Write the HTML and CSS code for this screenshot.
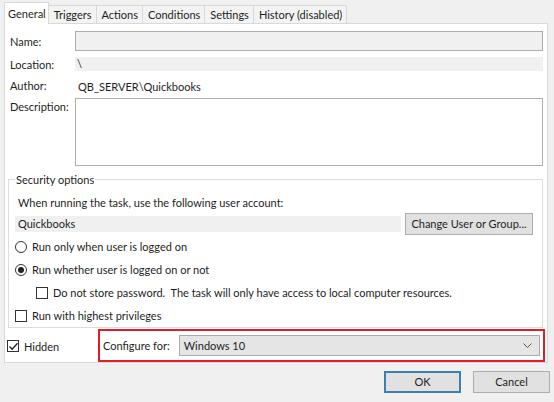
FILE: index.html
```html
<!DOCTYPE html>
<html lang="en">
<head>
    <meta charset="UTF-8">
    <title>Task Properties</title>
    <link rel="stylesheet" href="styles.css">
</head>
<body>

<div class="dialog">
    <div class="tabs">
        <div class="tab active">General</div>
        <div class="tab">Triggers</div>
        <div class="tab">Actions</div>
        <div class="tab">Conditions</div>
        <div class="tab">Settings</div>
        <div class="tab">History (disabled)</div>
    </div>

    <div class="panel">
        <div class="fields">
            <div class="label row-name">Name:</div>
            <div class="input row-name"></div>

            <div class="label row-location">Location:</div>
            <div class="readonly row-location">\</div>

            <div class="label row-author">Author:</div>
            <div class="value row-author">QB_SERVER\Quickbooks</div>

            <div class="label label-top row-desc">Description:</div>
            <div class="textarea row-desc"></div>
        </div>

        <fieldset class="security">
            <legend>Security options</legend>
            <div class="hint">When running the task, use the following user account:</div>
            <div class="account">
                <div class="account-name">Quickbooks</div>
                <div class="btn btn-wide">Change User or Group...</div>
            </div>
            <div class="option">
                <span class="radio"></span>
                <span>Run only when user is logged on</span>
            </div>
            <div class="option">
                <span class="radio checked"></span>
                <span>Run whether user is logged on or not</span>
            </div>
            <div class="option sub">
                <span class="check"></span>
                <span>Do not store password.&nbsp; The task will only have access to local computer resources.</span>
            </div>
            <div class="option">
                <span class="check"></span>
                <span>Run with highest privileges</span>
            </div>
        </fieldset>

        <div class="bottom">
            <div class="option hidden-opt">
                <span class="check checked">
                    <svg width="11" height="11" viewBox="0 0 11 11"><path d="M1.5 5.5 L4.2 8.2 L9.5 2.2" fill="none" stroke="#222" stroke-width="1.3"/></svg>
                </span>
                <span>Hidden</span>
            </div>
            <div class="configure">
                <span>Configure for:</span>
                <div class="select">
                    <span>Windows 10</span>
                    <svg width="9" height="5" viewBox="0 0 9 5"><path d="M0.5 0.5 L4.5 4.5 L8.5 0.5" fill="none" stroke="#555" stroke-width="1"/></svg>
                </div>
            </div>
        </div>
    </div>

    <div class="buttons">
        <div class="btn btn-default">OK</div>
        <div class="btn">Cancel</div>
    </div>
</div>

</body>
</html>
```

FILE: styles.css
```css
body {
    margin: 0;
    background-color: #f0f0f0;
    font-family: Lato, "Noto Sans", sans-serif;
    font-size: 11px;
    color: #1e1e1e;
}

.dialog {
    width: 554px;
    height: 402px;
    padding-top: 2px;
    box-sizing: border-box;
}

/* tab strip */
.tabs {
    display: flex;
    align-items: flex-end;
    margin-left: 4px;
    height: 21px;
    position: relative;
    z-index: 1;
}

.tab {
    height: 18px;
    line-height: 17px;
    padding: 0 4px 0 5px;
    border: 1px solid #d9d9d9;
    border-bottom: none;
    border-left: none;
    background-color: #f3f3f3;
    box-sizing: border-box;
}

.tab.active {
    height: 22px;
    line-height: 21px;
    margin-bottom: -1px;
    background-color: #fff;
    border-left: 1px solid #d9d9d9;
    padding: 0 2px 0 3px;
}

.panel {
    margin: 0 6px 0 4px;
    height: 340px;
    box-sizing: border-box;
    background-color: #fff;
    border: 1px solid #d9d9d9;
    padding: 7px 4px 0 5px;
}

/* name / location / author / description */
.fields {
    display: grid;
    grid-template-columns: 65px 1fr;
    grid-template-rows: 20px 14px 14px 69px;
    row-gap: 6px;
}

.fields .row-author { margin-top: 1px; }
.fields .row-desc { margin-top: 1px; }

.label {
    display: flex;
    align-items: center;
}

.row-author {
    padding-top: 2px;
}

.label-top {
    align-items: flex-start;
    padding-top: 2px;
}

.input {
    background-color: #f0f0f0;
    border: 1px solid #adadad;
}

.readonly {
    background-color: #f0f0f0;
    padding-left: 2px;
    line-height: 14px;
}

.value {
    padding-left: 3px;
    line-height: 14px;
}

.textarea {
    border: 1px solid #adadad;
}

/* security options group */
.security {
    margin: 7px 0 0 -2px;
    padding: 0 9px 0 6px;
    border: 1px solid #dcdcdc;
    height: 155px;
    box-sizing: border-box;
}

.security legend {
    padding: 0 1px;
}

.hint {
    margin: 9px 0 0 3px;
    line-height: 16px;
}

.account {
    display: flex;
    align-items: center;
    justify-content: space-between;
    margin-top: 2px;
}

.account-name {
    width: 383px;
    height: 16px;
    line-height: 16px;
    padding-left: 3px;
    background-color: #f0f0f0;
}

.btn {
    height: 22px;
    line-height: 20px;
    box-sizing: border-box;
    text-align: center;
    background-color: #e1e1e1;
    border: 1px solid #adadad;
}

.btn-wide {
    width: 128px;
}

.option {
    display: flex;
    align-items: center;
    height: 23px;
    gap: 5px;
}

.option.sub {
    padding-left: 21px;
}

.radio {
    width: 12px;
    height: 12px;
    border: 1px solid #333;
    border-radius: 50%;
    box-sizing: border-box;
    display: flex;
    align-items: center;
    justify-content: center;
}

.radio.checked::after {
    content: "";
    width: 6px;
    height: 6px;
    border-radius: 50%;
    background-color: #222;
}

.check {
    width: 12px;
    height: 12px;
    border: 1px solid #333;
    box-sizing: border-box;
    display: flex;
    align-items: center;
    justify-content: center;
}

.check svg {
    flex: none;
}

/* hidden + configure row */
.bottom {
    display: flex;
    align-items: center;
    margin-left: -3px;
    margin-right: -2px;
    margin-top: 1px;
}

.hidden-opt {
    width: 91px;
    padding-top: 1px;
}

.configure {
    flex: 1;
    display: flex;
    align-items: center;
    height: 33px;
    box-sizing: border-box;
    border: 2px solid #e31b23;
    padding: 0 3px 0 3px;
    gap: 9px;
}

.select {
    flex: 1;
    height: 21px;
    box-sizing: border-box;
    background-color: #e5e5e5;
    border: 1px solid #acacac;
    display: flex;
    align-items: center;
    justify-content: space-between;
    padding: 0 7px 0 4px;
}

/* dialog buttons */
.buttons {
    display: flex;
    justify-content: flex-end;
    gap: 12px;
    margin-top: 8px;
    padding-right: 4px;
}

.buttons .btn {
    width: 77px;
}

.btn-default {
    border: 1px solid #3c7fb1;
    box-shadow: inset 0 0 0 1px #3c7fb1;
}
```
